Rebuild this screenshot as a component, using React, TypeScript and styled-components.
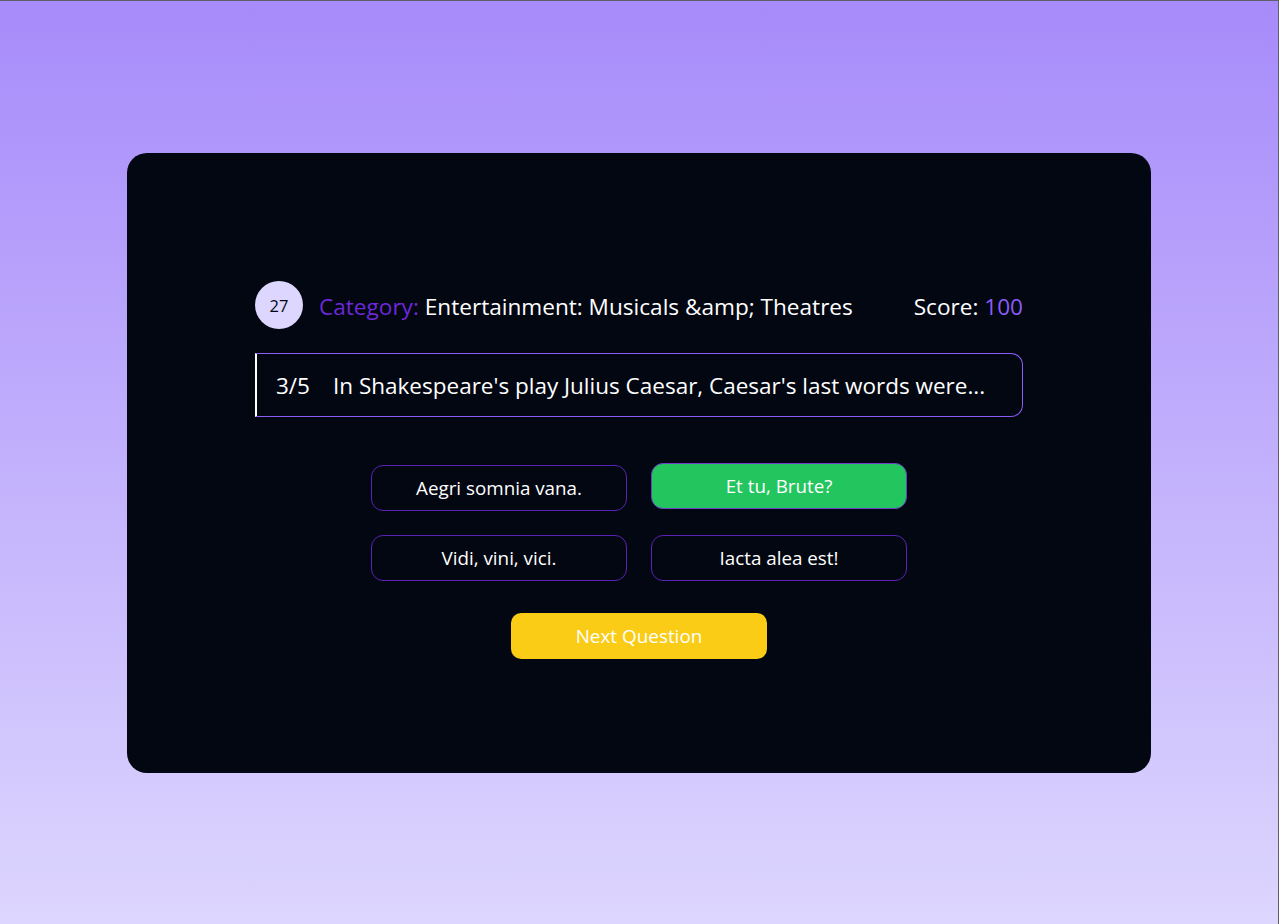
import React from "react";
import styled, { createGlobalStyle } from "styled-components";

const Global = createGlobalStyle`
  html, body { margin: 0; padding: 0; }
  body {
    font-family: "Open Sans", "Noto Sans", sans-serif;
    background: #ffffff;
  }
  * { box-sizing: border-box; }
`;

const Page = styled.div`
  min-height: 924px;
  height: 924px;
  background: linear-gradient(180deg, #a78bfa 0%, #ddd6fe 100%);
  border-top: 1px solid #5f5f66;
  border-right: 1px solid #5f5f66;
  display: flex;
  justify-content: center;
  padding-top: 152px;
`;

const Card = styled.main`
  width: 1024px;
  height: 620px;
  background: #030712;
  border-radius: 20px;
  display: flex;
  flex-direction: column;
  align-items: center;
  padding-top: 128px;
`;

const Inner = styled.div`
  width: 768px;
  display: flex;
  flex-direction: column;
  align-items: center;
`;

const Header = styled.div`
  width: 100%;
  height: 48px;
  display: flex;
  align-items: center;
  gap: 16px;
  font-size: 22.6px;
  color: #ffffff;
`;

const Badge = styled.div`
  width: 48px;
  height: 48px;
  border-radius: 50%;
  background: #ddd6fe;
  color: #030712;
  font-size: 16.5px;
  display: flex;
  align-items: center;
  justify-content: center;
  flex-shrink: 0;
`;

const CategoryText = styled.div`
  flex: 1;
  white-space: nowrap;
  margin-top: 2px;
`;

const ScoreText = styled.div`
  white-space: nowrap;
  margin-top: 2px;
`;

const Label = styled.span<{ $tone: string }>`
  color: ${(p) => p.$tone};
`;

const Question = styled.div`
  margin-top: 24px;
  width: 100%;
  height: 64px;
  border: 1px solid #8b5cf6;
  border-left: 2px solid #ffffff;
  border-radius: 0 12px 12px 0;
  display: flex;
  align-items: center;
  gap: 23px;
  padding-left: 19px;
  font-size: 22.5px;
  color: #ffffff;
  white-space: nowrap;
`;

const Answers = styled.div`
  margin-top: 48px;
  display: grid;
  grid-template-columns: 256px 256px;
  column-gap: 24px;
  row-gap: 24px;
`;

const Answer = styled.button<{ $correct?: boolean }>`
  height: 46px;
  border-radius: 12px;
  border: 1px solid ${(p) => (p.$correct ? "#6d3fc9" : "#5b21b6")};
  background: ${(p) => (p.$correct ? "#22c55e" : "transparent")};
  color: #ffffff;
  font-family: inherit;
  font-size: 18.8px;
  transform: ${(p) => (p.$correct ? "translateY(-2px)" : "none")};
  cursor: pointer;
`;

const Next = styled.button`
  margin-top: 32px;
  width: 256px;
  height: 46px;
  border: none;
  border-radius: 10px;
  background: #facc15;
  color: #ffffff;
  font-family: inherit;
  font-size: 18.9px;
  cursor: pointer;
`;

const answers = [
  { text: "Aegri somnia vana.", correct: false },
  { text: "Et tu, Brute?", correct: true },
  { text: "Vidi, vini, vici.", correct: false },
  { text: "Iacta alea est!", correct: false },
];

export default function App() {
  return (
    <>
      <Global />
      <Page>
        <Card>
          <Inner>
            <Header>
              <Badge>27</Badge>
              <CategoryText>
                <Label $tone="#6d28d9">Category:</Label> Entertainment: Musicals &amp;amp; Theatres
              </CategoryText>
              <ScoreText>
                Score: <Label $tone="#8b5cf6">100</Label>
              </ScoreText>
            </Header>
            <Question>
              <span>3/5</span>
              <span>In Shakespeare's play Julius Caesar, Caesar's last words were...</span>
            </Question>
            <Answers>
              {answers.map((a) => (
                <Answer key={a.text} $correct={a.correct}>
                  {a.text}
                </Answer>
              ))}
            </Answers>
            <Next>Next Question</Next>
          </Inner>
        </Card>
      </Page>
    </>
  );
}
